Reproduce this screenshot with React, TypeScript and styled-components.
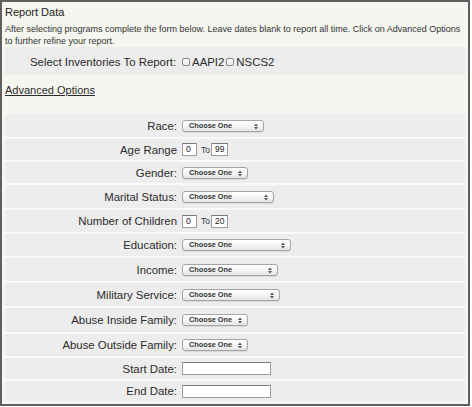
import React from "react";
import styled, { createGlobalStyle } from "styled-components";

const GlobalStyle = createGlobalStyle`
  html, body {
    margin: 0;
    padding: 0;
    background: #ffffff;
  }
  body {
    font-family: "Liberation Sans", Arial, Helvetica, sans-serif;
    color: #2b2b2b;
  }
`;

const Frame = styled.div`
  box-sizing: border-box;
  width: 470px;
  height: 406px;
  border: 2px solid #5f5f5f;
  background: #f5f6f0;
  padding: 4px 3px 0 3px;
  display: flex;
  flex-direction: column;
`;

const Heading = styled.h2`
  margin: 0;
  font-size: 11px;
  font-weight: normal;
  line-height: 13px;
  color: #222;
`;

const Intro = styled.p`
  margin: 4px 0 0;
  font-size: 9px;
  line-height: 12px;
  color: #333;
`;

const InventoryBand = styled.div`
  margin-top: 0;
  height: 27px;
  box-sizing: border-box;
  padding: 2px 0 0 25px;
  background: #ececec;
  display: flex;
  align-items: center;
  font-size: 11.4px;
`;

const InventoryLabel = styled.span`
  margin-right: 6px;
`;

const CheckLabel = styled.label`
  display: inline-flex;
  align-items: center;
  gap: 1px;
`;

const Check = styled.span`
  display: inline-block;
  box-sizing: border-box;
  width: 8px;
  height: 8px;
  border: 1px solid #8a8a8a;
  border-radius: 2px;
  background: linear-gradient(#ffffff, #e6e6e6);
  margin-right: 1px;
`;

const AdvancedLink = styled.a`
  margin-top: 10px;
  font-size: 11px;
  line-height: 13px;
  color: #2b2b2b;
  text-decoration: underline;
`;

const FormTable = styled.div`
  margin-top: 17px;
  display: flex;
  flex-direction: column;
  gap: 2px;
  background: #fafafa;
`;

const Row = styled.div<{ $h: number }>`
  display: grid;
  grid-template-columns: 172px 1fr;
  column-gap: 5px;
  align-items: center;
  height: ${(p) => p.$h}px;
  background: #ededed;
`;

const Label = styled.span`
  text-align: right;
  font-size: 11.4px;
  color: #2b2b2b;
`;

const Controls = styled.div`
  display: flex;
  align-items: center;
  gap: 4px;
`;

const SelectBox = styled.div<{ $w: number }>`
  box-sizing: border-box;
  position: relative;
  width: ${(p) => p.$w}px;
  height: 12px;
  border: 1px solid #a4a4a4;
  border-radius: 3px;
  background: linear-gradient(#ffffff 0%, #f3f3f3 60%, #e4e4e4 100%);
  box-shadow: 0 1px 0 rgba(0, 0, 0, 0.08);
  font-size: 7.3px;
  font-weight: bold;
  line-height: 10px;
  padding-left: 6px;
  color: #333;
`;

const Arrows = styled.svg`
  position: absolute;
  right: 5px;
  top: 2px;
`;

const TextInput = styled.span<{ $w: number }>`
  box-sizing: border-box;
  display: inline-block;
  width: ${(p) => p.$w}px;
  height: 13px;
  border: 1px solid #9c9c9c;
  border-top-color: #7c7c7c;
  background: #fff;
  font-size: 8.5px;
  line-height: 11px;
  padding-left: 3px;
  color: #222;
`;

const Small = styled.span`
  font-size: 8.5px;
  color: #333;
`;

function Select({ width }: { width: number }) {
  return (
    <SelectBox $w={width}>
      Choose One
      <Arrows width="4" height="7" viewBox="0 0 4 7">
        <path d="M0 3 L2 0.5 L4 3 Z" fill="#555" />
        <path d="M0 4 L2 6.5 L4 4 Z" fill="#555" />
      </Arrows>
    </SelectBox>
  );
}

function Range({ from, to }: { from: string; to: string }) {
  return (
    <Controls>
      <TextInput $w={15}>{from}</TextInput>
      <Small>To</Small>
      <TextInput $w={17} style={{ marginLeft: -3 }}>
        {to}
      </TextInput>
    </Controls>
  );
}

type Field =
  | { label: string; kind: "select"; width: number; h: number }
  | { label: string; kind: "range"; from: string; to: string; h: number }
  | { label: string; kind: "date"; h: number };

const fields: Field[] = [
  { label: "Race:", kind: "select", width: 82, h: 23 },
  { label: "Age Range", kind: "range", from: "0", to: "99", h: 21 },
  { label: "Gender:", kind: "select", width: 66, h: 21 },
  { label: "Marital Status:", kind: "select", width: 92, h: 23 },
  { label: "Number of Children", kind: "range", from: "0", to: "20", h: 22 },
  { label: "Education:", kind: "select", width: 109, h: 22 },
  { label: "Income:", kind: "select", width: 96, h: 23 },
  { label: "Military Service:", kind: "select", width: 98, h: 23 },
  { label: "Abuse Inside Family:", kind: "select", width: 66, h: 24 },
  { label: "Abuse Outside Family:", kind: "select", width: 66, h: 22 },
  { label: "Start Date:", kind: "date", h: 21 },
  { label: "End Date:", kind: "date", h: 20 },
];

export default function App() {
  return (
    <>
      <GlobalStyle />
      <Frame>
        <Heading>Report Data</Heading>
        <Intro>
          After selecting programs complete the form below. Leave dates blank to
          report all time. Click on Advanced Options to further refine your
          report.
        </Intro>
        <InventoryBand>
          <InventoryLabel>Select Inventories To Report:</InventoryLabel>
          <CheckLabel>
            <Check />
            AAPI2
          </CheckLabel>
          <CheckLabel style={{ marginLeft: 2 }}>
            <Check />
            NSCS2
          </CheckLabel>
        </InventoryBand>
        <AdvancedLink>Advanced Options</AdvancedLink>
        <FormTable>
          {fields.map((f) => (
            <Row key={f.label} $h={f.h}>
              <Label>{f.label}</Label>
              <Controls>
                {f.kind === "select" && <Select width={f.width} />}
                {f.kind === "range" && <Range from={f.from} to={f.to} />}
                {f.kind === "date" && <TextInput $w={89} />}
              </Controls>
            </Row>
          ))}
        </FormTable>
      </Frame>
    </>
  );
}
